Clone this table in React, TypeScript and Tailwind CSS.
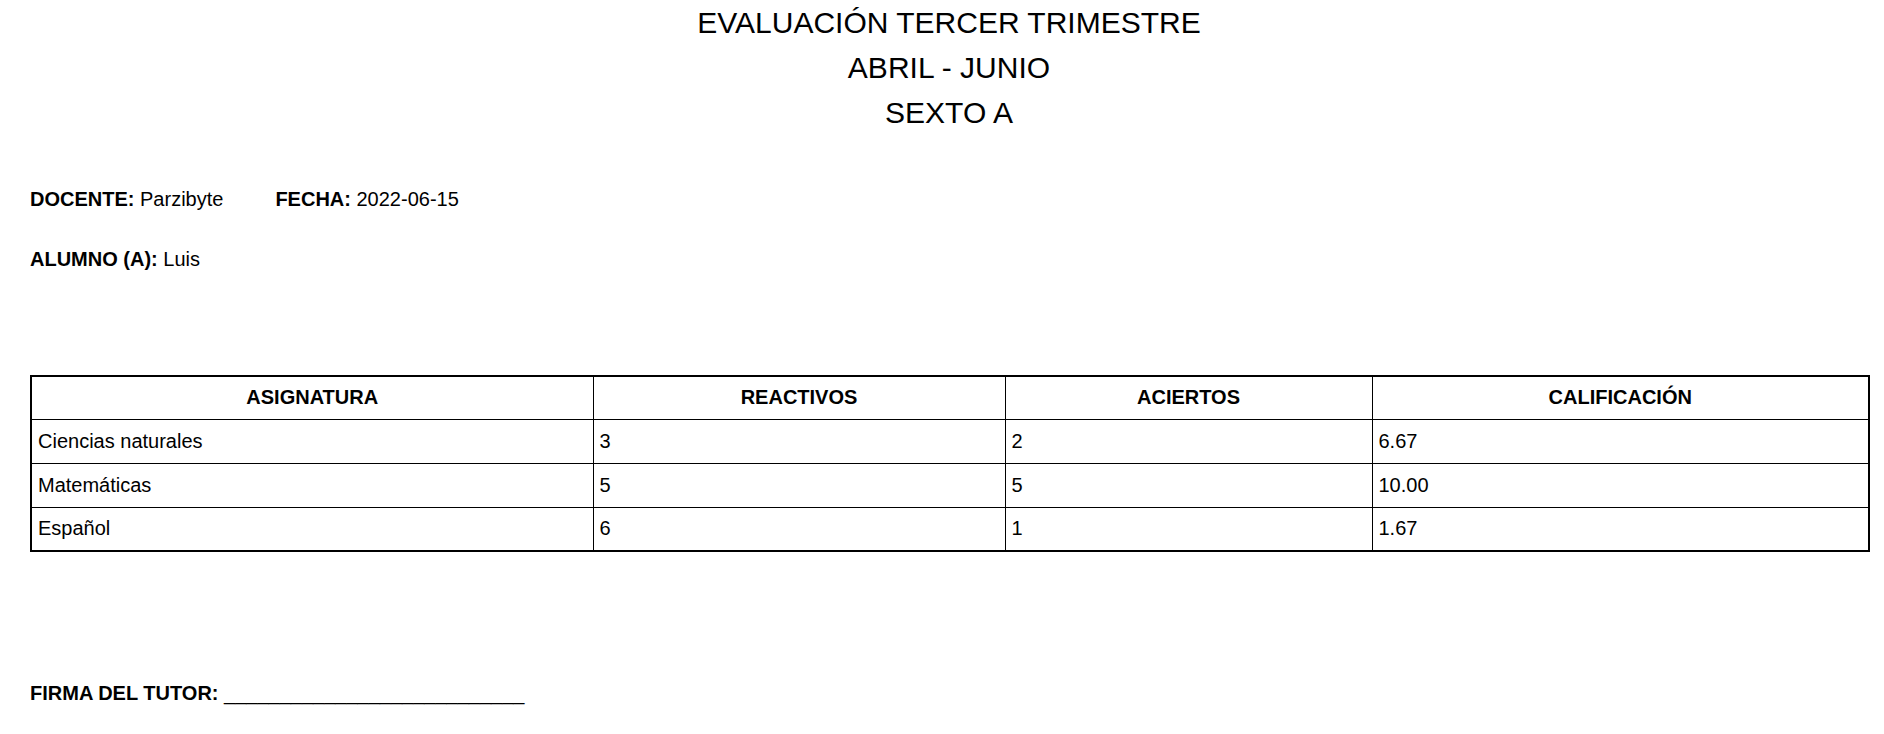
const rows = [
  { subject: "Ciencias naturales", items: 3, hits: 2, grade: "6.67" },
  { subject: "Matemáticas", items: 5, hits: 5, grade: "10.00" },
  { subject: "Español", items: 6, hits: 1, grade: "1.67" },
];

export default function App() {
  return (
    <div className="min-h-screen bg-white pl-[30px] pr-[16px] text-black font-['Liberation_Sans',Arial,sans-serif]">
      <div className="text-center text-[30px] leading-[45px]">
        <div>EVALUACIÓN TERCER TRIMESTRE</div>
        <div>ABRIL - JUNIO</div>
        <div>SEXTO A</div>
      </div>

      <p className="mt-[53px] text-[20px] leading-[23px]">
        <strong>DOCENTE:</strong> Parzibyte
        <span className="ml-[52px]">
          <strong>FECHA:</strong> 2022-06-15
        </span>
      </p>
      <p className="mt-[37px] text-[20px] leading-[23px]">
        <strong>ALUMNO (A):</strong> Luis
      </p>

      <table className="mt-[104px] w-[1838px] table-fixed border-collapse border-2 border-black text-[20px] leading-[23px]">
        <colgroup>
          <col className="w-[562px]" />
          <col className="w-[412px]" />
          <col className="w-[367px]" />
          <col className="w-[497px]" />
        </colgroup>
        <thead>
          <tr className="h-[43px]">
            {["ASIGNATURA", "REACTIVOS", "ACIERTOS", "CALIFICACIÓN"].map((h) => (
              <th key={h} className="border border-black px-[6px] text-center font-bold">
                {h}
              </th>
            ))}
          </tr>
        </thead>
        <tbody>
          {rows.map((r) => (
            <tr key={r.subject} className="h-[44px]">
              <td className="border border-black px-[6px]">{r.subject}</td>
              <td className="border border-black px-[6px]">{r.items}</td>
              <td className="border border-black px-[6px]">{r.hits}</td>
              <td className="border border-black px-[6px]">{r.grade}</td>
            </tr>
          ))}
        </tbody>
      </table>

      <p className="mt-[130px] text-[20px] leading-[23px]">
        <strong>FIRMA DEL TUTOR:</strong> ___________________________
      </p>
    </div>
  );
}
